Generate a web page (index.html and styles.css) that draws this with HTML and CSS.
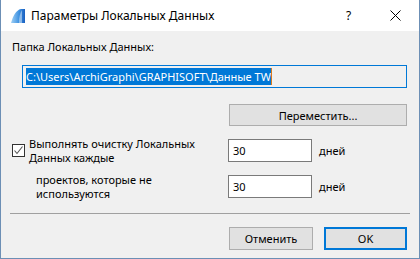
FILE: index.html
```html
<!DOCTYPE html>
<html lang="ru">
<head>
  <meta charset="UTF-8">
  <title>Параметры Локальных Данных</title>
  <link rel="stylesheet" href="styles.css">
</head>
<body>

  <div class="window">
    <div class="titlebar">
      <svg class="app-icon" width="16" height="16" viewBox="0 0 16 16">
        <defs>
          <linearGradient id="ic" x1="0" y1="0" x2="1" y2="0">
            <stop offset="0" stop-color="#9fd0f5"/>
            <stop offset="0.6" stop-color="#3b8fe0"/>
            <stop offset="1" stop-color="#1a5fc0"/>
          </linearGradient>
        </defs>
        <path d="M1 15 C3 8 6 2 11 1 L15 1 L15 15 Z" fill="url(#ic)"/>
        <path d="M9 15 C9 9 10 5 12 2 L12 15 Z" fill="#ffffff" opacity="0.45"/>
      </svg>
      <span class="title">Параметры Локальных Данных</span>
      <span class="help">?</span>
      <svg class="close" width="11" height="11" viewBox="0 0 11 11">
        <path d="M0.5 0.5 L10.5 10.5 M10.5 0.5 L0.5 10.5" stroke="#000" stroke-width="1"/>
      </svg>
    </div>

    <div class="content">
      <div class="label">Папка Локальных Данных:</div>
      <div class="path-field">
        <span class="selected">C:\Users\ArchiGraphi\GRAPHISOFT\Данные TW</span><span class="caret"></span>
      </div>
      <button class="btn move-btn">Переместить...</button>

      <div class="option-row">
        <div class="option-left">
          <span class="checkbox">
            <svg width="11" height="11" viewBox="0 0 11 11">
              <path d="M1.5 5.5 L4 8.5 L9.5 1.5" fill="none" stroke="#555" stroke-width="1.1"/>
            </svg>
          </span>
          <span class="option-text">Выполнять очистку Локальных<br>Данных каждые</span>
        </div>
        <div class="num-field">30</div>
        <span class="unit">дней</span>
      </div>

      <div class="option-row">
        <div class="option-left">
          <span class="option-text indent">проектов, которые не<br>используются</span>
        </div>
        <div class="num-field">30</div>
        <span class="unit">дней</span>
      </div>

      <hr class="separator">

      <div class="footer">
        <button class="btn cancel-btn">Отменить</button>
        <button class="btn ok-btn">OK</button>
      </div>
    </div>
  </div>

</body>
</html>
```

FILE: styles.css
```css
body {
  margin: 0;
  font-family: 'Noto Sans', 'Segoe UI', sans-serif;
  font-size: 11px;
  color: #000;
  background: #f0f0f0;
}
.window {
  width: 420px;
  height: 259px;
  box-sizing: border-box;
  border: 1px solid #6c8fb5;
  border-top: none;
  background: #f0f0f0;
  overflow: hidden;
}
.titlebar {
  height: 31px;
  background: #fff;
  display: flex;
  align-items: center;
  padding-left: 9px;
}
.app-icon {
  margin-right: 5px;
}
.title {
  flex: 1;
  font-size: 12px;
  line-height: 16px;
}
.help {
  width: 10px;
  margin-right: 34px;
  font-size: 12px;
  line-height: 16px;
}
.close {
  margin-right: 18px;
}
.content {
  display: flex;
  flex-direction: column;
  padding: 0 12px 0 11px;
}
.label {
  margin-top: 8px;
  line-height: 16px;
}
.path-field {
  margin-top: 10px;
  margin-left: 10px;
  height: 23px;
  box-sizing: border-box;
  border: 1px solid #0078d7;
  display: flex;
  align-items: center;
  padding-left: 3px;
}
.selected {
  background: #0078d7;
  color: #fff;
  line-height: 17px;
}
.caret {
  width: 1px;
  height: 17px;
  background: #d97a1c;
}
.btn {
  font-family: inherit;
  font-size: 11px;
  color: #000;
  background: #e1e1e1;
  border: 1px solid #adadad;
  padding: 0;
  box-sizing: border-box;
}
.move-btn {
  margin-top: 16px;
  align-self: flex-end;
  width: 178px;
  height: 22px;
}
.option-row {
  margin-top: 13px;
  height: 23px;
  display: flex;
  align-items: center;
}
.option-left {
  width: 216px;
  height: 23px;
  display: flex;
  align-items: center;
}
.checkbox {
  width: 13px;
  height: 13px;
  flex: none;
  box-sizing: border-box;
  border: 1px solid #333;
  background: #fff;
  display: flex;
  align-items: center;
  justify-content: center;
  margin-right: 4px;
}
.option-text {
  line-height: 14px;
}
.option-text.indent {
  margin-left: 24px;
}
.num-field {
  width: 84px;
  height: 23px;
  box-sizing: border-box;
  border: 1px solid #7a7a7a;
  background: #fff;
  padding-left: 4px;
  line-height: 21px;
}
.unit {
  margin-left: 7px;
}
.separator {
  margin: 15px -3px 0 -2px;
  border: none;
  border-top: 1px solid #a0a0a0;
  height: 0;
}
.footer {
  margin-top: 13px;
  display: flex;
  justify-content: flex-end;
  gap: 11px;
}
.cancel-btn {
  width: 84px;
  height: 23px;
}
.ok-btn {
  width: 83px;
  height: 23px;
  border: 2px solid #0078d7;
}
```
